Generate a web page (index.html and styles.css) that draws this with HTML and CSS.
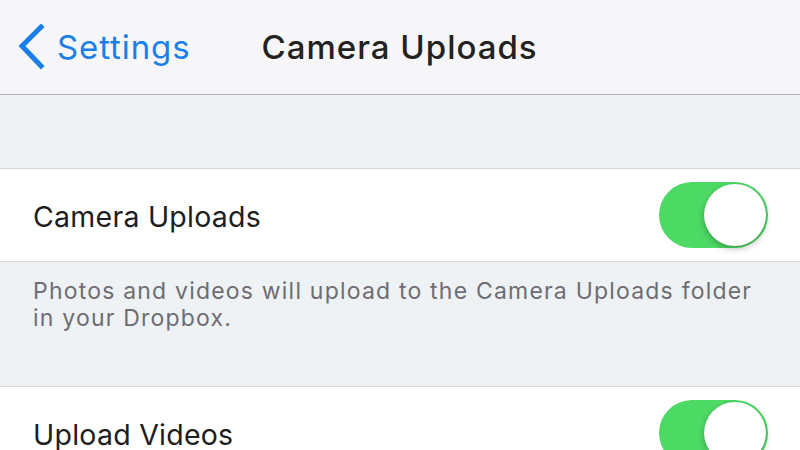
FILE: index.html
```html
<!DOCTYPE html>
<html lang="en">
<head>
<meta charset="UTF-8" />
<meta name="viewport" content="width=device-width, initial-scale=1" />
<title>Camera Uploads</title>
<link rel="stylesheet" href="styles.css">
</head>
<body>
<header class="nav-bar">
  <a class="back-link" href="#">
    <svg class="chevron" width="28" height="46" viewBox="0 0 28 46">
      <path d="M24 3 L5 22 L24 42" fill="none" stroke="#1a7fe8" stroke-width="5" stroke-linecap="square" stroke-linejoin="miter" />
    </svg>
    <span>Settings</span>
  </a>
  <h1 class="nav-title">Camera Uploads</h1>
</header>

<main>
  <div class="spacer"></div>

  <section class="group">
    <div class="row">
      <span class="row-label">Camera Uploads</span>
      <span class="switch on"><span class="knob"></span></span>
    </div>
  </section>
  <p class="footer-note">Photos and videos will upload to the Camera Uploads folder in your Dropbox.</p>

  <section class="group">
    <div class="row">
      <span class="row-label">Upload Videos</span>
      <span class="switch on"><span class="knob"></span></span>
    </div>
  </section>
</main>
</body>
</html>
```

FILE: styles.css
```css
/* Reset & base */
* {
  box-sizing: border-box;
  font-family: Inter, 'Noto Sans', sans-serif;
}
html, body {
  margin: 0;
  padding: 0;
  background: #eff2f5;
  overflow: hidden;
}
.nav-bar {
  height: 95px;
  background: #f6f6f8;
  border-bottom: 1px solid #b4b4b6;
  display: flex;
  align-items: center;
  padding-left: 17px;
}
.back-link {
  display: flex;
  align-items: center;
  gap: 12px;
  color: #1a7fe8;
  text-decoration: none;
  font-size: 33px;
  letter-spacing: 0.9px;
}
.chevron {
  display: block;
}
.nav-title {
  margin: 0 0 0 71px;
  font-size: 33px;
  font-weight: 500;
  color: #222;
  letter-spacing: 1px;
}
.spacer {
  height: 73px;
}
.group {
  background: #fff;
  border-top: 1px solid #d6d6da;
  border-bottom: 1px solid #d6d6da;
}
.row {
  height: 92px;
  display: flex;
  align-items: center;
  justify-content: space-between;
  padding: 0 32px 0 33px;
}
.row-label {
  font-size: 28.5px;
  letter-spacing: 0.25px;
  color: #1e1e1e;
  margin-top: 2px;
}
.switch {
  position: relative;
  width: 109px;
  height: 66px;
  border-radius: 33px;
  background: #4cd964;
}
.knob {
  position: absolute;
  top: 2px;
  right: 2px;
  width: 62px;
  height: 62px;
  border-radius: 50%;
  background: #fff;
  box-shadow: 0 3px 6px rgba(0, 0, 0, 0.25), 0 0 1px rgba(0, 0, 0, 0.2);
}
.footer-note {
  margin: 0;
  padding: 16px 33px 0;
  height: 124px;
  font-size: 23px;
  line-height: 27px;
  letter-spacing: 1.2px;
  color: #6d6d72;
}
```
